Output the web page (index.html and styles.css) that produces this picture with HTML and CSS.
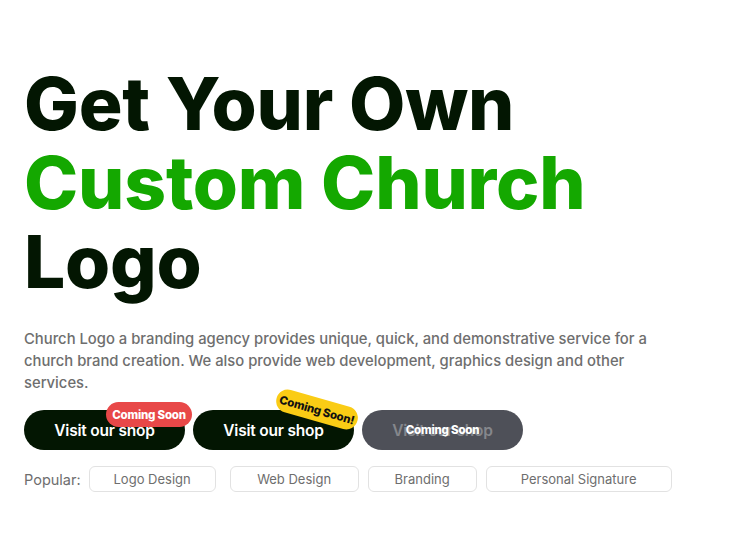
FILE: index.html
```html
<!DOCTYPE html>
<html>
<head>
<meta charset="utf-8">
<link rel="stylesheet" href="styles.css">
</head>
<body>
<main class="hero">
  <h1 class="title">Get Your Own<br><span class="accent">Custom Church</span><br>Logo</h1>
  <p class="lead">Church Logo a branding agency provides unique, quick, and demonstrative service for a church brand creation. We also provide web development, graphics design and other services.</p>
  <div class="actions">
    <a class="btn">Visit our shop<span class="badge badge-red">Coming Soon</span></a>
    <a class="btn">Visit our shop<span class="badge badge-yellow">Coming Soon!</span></a>
    <a class="btn btn-disabled"><span class="faded">Visit our shop</span><span class="badge-over">Coming Soon</span></a>
  </div>
  <div class="popular">
    <span class="popular-label">Popular:</span>
    <a class="tag tag-logo">Logo Design</a>
    <a class="tag tag-web">Web Design</a>
    <a class="tag tag-brand">Branding</a>
    <a class="tag tag-sig">Personal Signature</a>
  </div>
</main>
</body>
</html>
```
FILE: styles.css
```css
* { box-sizing: border-box; }
body {
  margin: 0;
  background: #fff;
  font-family: "Inter", "Lato", sans-serif;
}
.hero {
  padding: 64px 24px 0 24px;
}
.title {
  margin: 0;
  font-family: "Inter", sans-serif;
  font-weight: 800;
  font-size: 73px;
  line-height: 79px;
  color: #031602;
  letter-spacing: -0.2px;
}
.accent { color: #14a800; }
.lead {
  margin: 27px 0 0 0;
  width: 640px;
  font-size: 14.8px;
  line-height: 22px;
  color: #6e6e6e;
  font-weight: 500;
}
.actions {
  display: flex;
  gap: 8px;
  margin-top: 16px;
}
.btn {
  position: relative;
  display: flex;
  align-items: center;
  justify-content: center;
  width: 161px;
  height: 40px;
  border-radius: 20px;
  background: #031602;
  color: #fff;
  font-weight: 600;
  font-size: 15.5px;
  letter-spacing: -0.2px;
}
.btn-disabled { background: #4e5058; }
.faded { color: #85878c; }
.badge {
  position: absolute;
  display: flex;
  align-items: center;
  justify-content: center;
  font-size: 11.5px;
  font-weight: 800;
  border-radius: 13px;
  white-space: nowrap;
  letter-spacing: -0.2px;
}
.badge-red {
  top: -8px;
  right: -7px;
  width: 86px;
  height: 25px;
  background: #e84848;
  color: #fff;
}
.badge-yellow {
  top: -12px;
  right: -5px;
  width: 84px;
  height: 23px;
  background: #facc15;
  color: #111;
  transform: rotate(16deg);
}
.badge-over {
  position: absolute;
  left: 0;
  right: 0;
  top: 0;
  bottom: 0;
  display: flex;
  align-items: center;
  justify-content: center;
  color: #fff;
  font-size: 11.5px;
  font-weight: 800;
  letter-spacing: -0.2px;
}
.popular {
  display: flex;
  align-items: center;
  margin-top: 16px;
  height: 26px;
}
.popular-label {
  font-size: 14.5px;
  color: #6e6e6e;
  margin-right: 8px;
}
.tag {
  display: flex;
  align-items: center;
  justify-content: center;
  height: 26px;
  border: 1px solid #e2e2e2;
  border-radius: 6px;
  font-size: 13px;
  color: #6e6e6e;
}
.tag-logo { width: 127px; margin-right: 14px; }
.tag-web { width: 129px; margin-right: 9px; }
.tag-brand { width: 109px; margin-right: 9px; }
.tag-sig { width: 186px; }
```
